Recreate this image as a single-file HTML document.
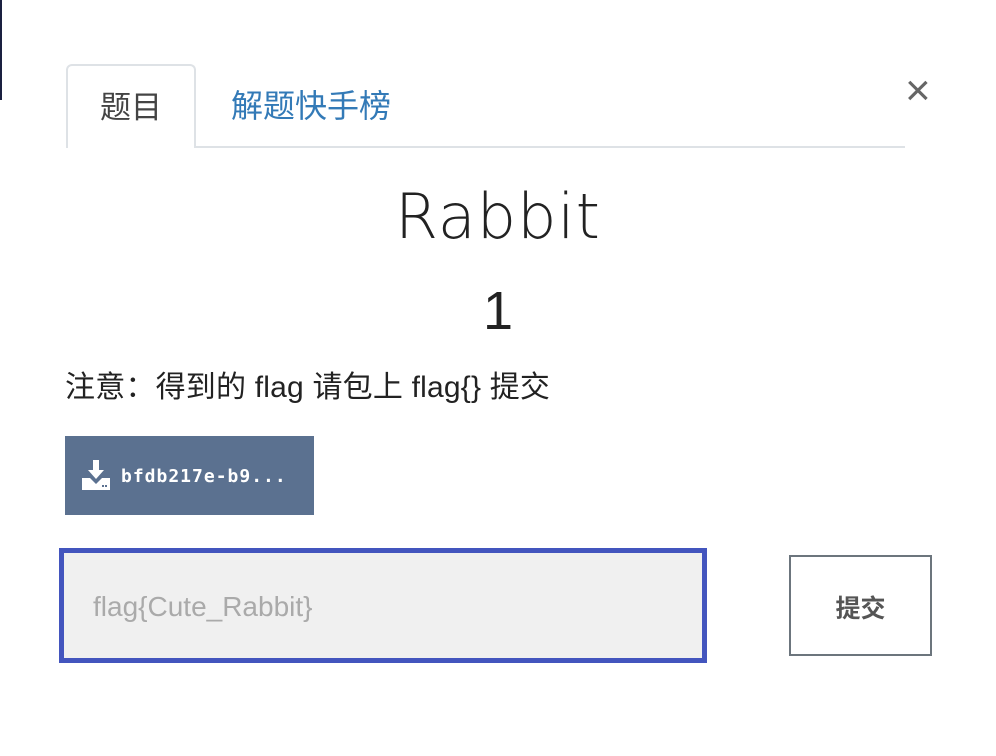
<!DOCTYPE html>
<html><head><meta charset="utf-8"><style>
body{margin:0;width:996px;height:756px;background:#fff;position:relative;overflow:hidden;font-family:"Liberation Sans","Noto Sans CJK SC",sans-serif;}
.edge{position:absolute;left:0;top:0;width:2px;height:100px;background:#1a2040}
.tab{position:absolute;left:66px;top:64px;width:130px;height:84px;border:2px solid #dee2e6;border-bottom:none;border-radius:6px 6px 0 0;background:#fff;box-sizing:border-box;text-align:center;line-height:84px;font-size:31px;color:#444}
.tab2{position:absolute;left:231px;top:64px;line-height:84px;font-size:32px;color:#337ab7}
.line{position:absolute;left:196px;top:146px;width:709px;height:2px;background:#dee2e6}
.close{position:absolute;left:905px;top:66px;font-size:44px;color:#666}
.title{position:absolute;left:0;width:996px;text-align:center;top:180px;font-family:"DejaVu Sans",sans-serif;font-size:62px;color:#222;font-weight:200;letter-spacing:1px}
.num{position:absolute;left:0;width:996px;text-align:center;top:280px;font-family:"Liberation Sans",sans-serif;font-size:54px;color:#222}
.note{position:absolute;left:65px;top:362px;font-size:30px;color:#222;letter-spacing:0.2px}
.btn{position:absolute;left:65px;top:436px;width:249px;height:79px;background:#5b7190;color:#fff;font-family:"DejaVu Sans Mono",monospace;font-size:18px;font-weight:bold;line-height:81px;box-sizing:border-box;padding-left:56px;letter-spacing:1px}
.btn svg{position:absolute;left:17px;top:24px}
.input{position:absolute;left:59px;top:548px;width:648px;height:115px;border:5px solid #4355be;background:#f0f0f0;box-sizing:border-box;font-size:28px;color:#aaa;padding-left:29px;line-height:108px}
.sub{position:absolute;left:789px;top:555px;width:143px;height:101px;border:2px solid #6c757d;box-sizing:border-box;text-align:center;line-height:104px;font-size:25px;font-weight:bold;color:#555}
</style></head><body>
<div class="edge"></div>
<div class="tab">题目</div>
<div class="tab2">解题快手榜</div>
<div class="line"></div>
<div class="close">×</div>
<div class="title">Rabbit</div>
<div class="num">1</div>
<div class="note">注意：得到的 flag 请包上 flag{} 提交</div>
<div class="btn"><svg width="28" height="30" viewBox="0 0 28 30"><path d="M11 0h6v10h5l-8 9-8-9h5z" fill="#fff"/><path d="M0 18h8l6 6 6-6h8v12H0z" fill="#fff"/><rect x="20" y="25" width="2" height="2" fill="#5b7190"/><rect x="23" y="25" width="2" height="2" fill="#5b7190"/></svg>bfdb217e-b9...</div>
<div class="input">flag{Cute_Rabbit}</div>
<div class="sub">提交</div>
</body></html>
